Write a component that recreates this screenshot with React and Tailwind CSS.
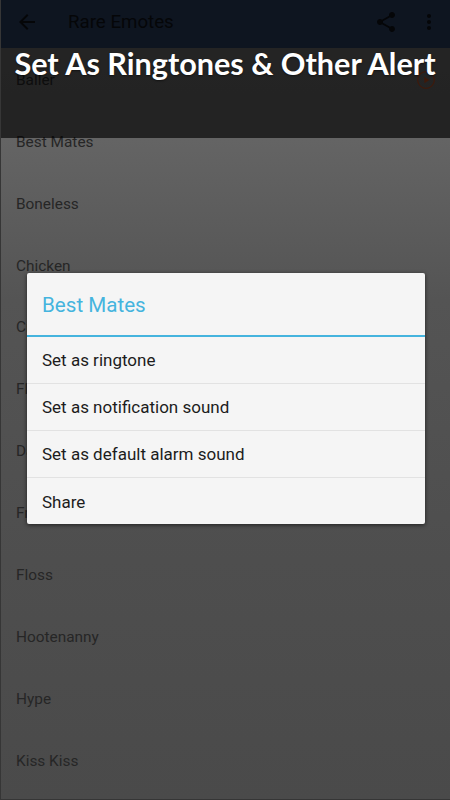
const emotes = ['Baller', 'Best Mates', 'Boneless', 'Chicken', 'Crackdown', 'Flapper', 'Dab', 'Fresh', 'Floss', 'Hootenanny', 'Hype', 'Kiss Kiss']
const actions = ['Set as ringtone', 'Set as notification sound', 'Set as default alarm sound', 'Share']

function ArrowBack() {
  return (
    <svg className="w-6 h-6" viewBox="0 0 24 24" fill="currentColor">
      <path d="M20 11H7.83l5.59-5.59L12 4l-8 8 8 8 1.41-1.41L7.83 13H20v-2z" />
    </svg>
  )
}

function ShareIcon() {
  return (
    <svg className="w-6 h-6" viewBox="0 0 24 24" fill="currentColor">
      <path d="M18 16.08c-.76 0-1.44.3-1.96.77L8.91 12.7c.05-.23.09-.46.09-.7s-.04-.47-.09-.7l7.05-4.11c.54.5 1.25.81 2.04.81 1.66 0 3-1.34 3-3s-1.34-3-3-3-3 1.34-3 3c0 .24.04.47.09.7L8.04 9.81C7.5 9.31 6.79 9 6 9c-1.66 0-3 1.34-3 3s1.34 3 3 3c.79 0 1.5-.31 2.04-.81l7.12 4.16c-.05.21-.08.43-.08.65 0 1.61 1.31 2.92 2.92 2.92 1.61 0 2.92-1.31 2.92-2.92s-1.31-2.92-2.92-2.92z" />
    </svg>
  )
}

function MoreIcon() {
  return (
    <svg className="w-6 h-6" viewBox="0 0 24 24" fill="currentColor">
      <path d="M12 8c1.1 0 2-.9 2-2s-.9-2-2-2-2 .9-2 2 .9 2 2 2zm0 2c-1.1 0-2 .9-2 2s.9 2 2 2 2-.9 2-2-.9-2-2-2zm0 6c-1.1 0-2 .9-2 2s.9 2 2 2 2-.9 2-2-.9-2-2-2z" />
    </svg>
  )
}

function PlayIcon() {
  return (
    <svg className="w-5 h-5 text-[#b0481f]" viewBox="0 0 24 24" fill="none" stroke="currentColor" strokeWidth="1.5">
      <circle cx="12" cy="12" r="10" />
      <path d="M10 8l6 4-6 4z" fill="currentColor" stroke="none" />
    </svg>
  )
}

export default function App() {
  return (
    <div className="relative w-[450px] h-[800px] overflow-hidden border-l border-b border-[#363636] bg-[linear-gradient(180deg,#6a6a6a_0px,#646464_140px,#545454_300px,#4e4e4e_560px,#4a4a4a_800px)] font-['Roboto',sans-serif]">
      {/* Toolbar */}
      <div className="h-12 bg-[#0e1520] flex items-center pl-[14px] pr-[9px] pb-[5px] text-[#050608]">
        <ArrowBack />
        <span className="ml-[29px] mt-px text-[18.7px]">Rare Emotes</span>
        <div className="flex-1" />
        <ShareIcon />
        <div className="w-[19px]" />
        <MoreIcon />
      </div>

      {/* List */}
      <div className="pt-[1.5px]">
        {emotes.map((name, i) => (
          <div key={name} className="h-[61.9px] flex items-center justify-between pl-[15px] pr-[14px] text-[15.4px] text-[#262626]">
            <span>{name}</span>
            {i === 0 && <PlayIcon />}
          </div>
        ))}
      </div>

      {/* Caption band */}
      <div className="absolute left-0 right-0 top-12 h-[90px] bg-black/65" />
      <div className="absolute -left-px right-0 top-[45px] text-center text-[30.6px] leading-[38px] font-bold text-white font-['Lato',sans-serif] whitespace-nowrap [text-shadow:0_1px_2px_rgba(0,0,0,0.5)]">
        Set As Ringtones &amp; Other Alert
      </div>

      {/* Dialog */}
      <div className="absolute left-[26px] top-[273px] w-[398px] h-[251px] bg-[#f5f5f5] rounded-[2px] shadow-[0_1px_4px_rgba(0,0,0,0.6)]">
        <div className="h-[64px] flex items-center pl-[15px] pt-[2px] text-[20.6px] text-[#45b4de] border-b-2 border-[#45b4de]">
          Best Mates
        </div>
        {actions.map((label, i) => (
          <div key={label} className={`h-[47px] flex items-center pl-[15px] pt-[2px] text-[17px] text-[#1c1c1c] ${i < actions.length - 1 ? 'border-b border-[#e2e2e2]' : ''}`}>
            {label}
          </div>
        ))}
      </div>
    </div>
  )
}
